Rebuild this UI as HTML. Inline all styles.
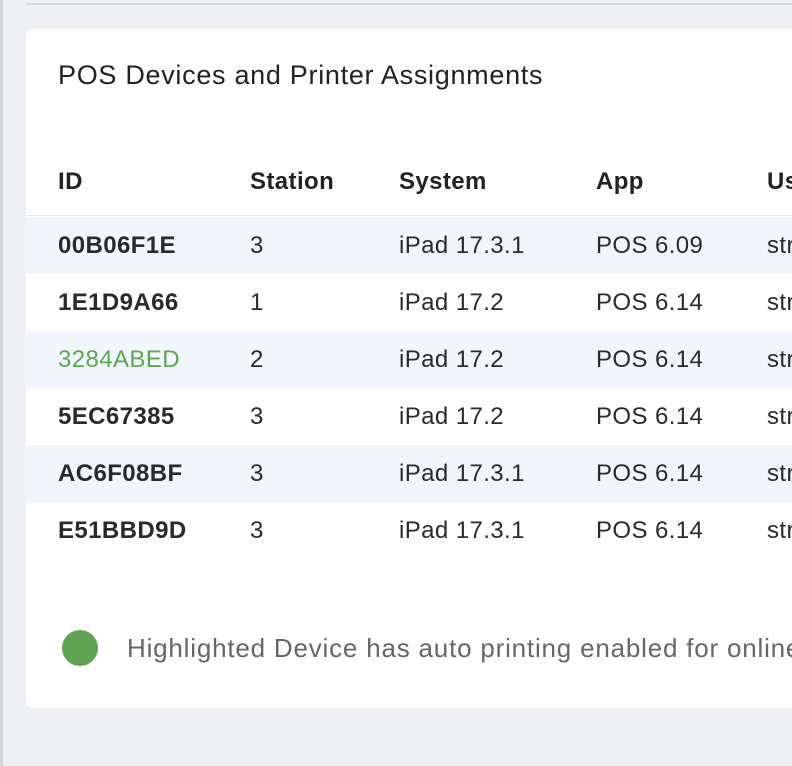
<!DOCTYPE html>
<html><head><style>
body{margin:0;width:792px;height:766px;overflow:hidden;background:#eef0f3;font-family:"Liberation Sans",sans-serif;position:relative}
.lb{position:absolute;left:0;top:0;width:3px;height:766px;background:#d4d5d8}
.tl{position:absolute;left:26px;top:3px;width:766px;height:2px;background:#d6d8dc}
.card{position:absolute;left:26px;top:29px;width:766px;height:679px;background:#fff;border-radius:7px 0 0 7px;overflow:hidden}
.t{position:absolute;left:32px;top:31px;font-size:27px;letter-spacing:0.7px;color:#222;white-space:nowrap}
.row{position:absolute;left:0;width:766px;height:57px}
.row span{position:absolute;top:15px;font-size:24px;letter-spacing:0.4px;color:#2a2a2a;white-space:nowrap}
.h span{font-weight:bold;color:#222}
.alt{background:#f1f6fd}
.c1{left:32px;font-weight:bold}.c2{left:224px}.c3{left:373px}.c4{left:570px}.c5{left:741px}
.dot{position:absolute;left:36px;top:601px;width:36px;height:36px;border-radius:50%;background:#5fa450}
.ft{position:absolute;left:101px;top:604px;font-size:26px;letter-spacing:0.8px;color:#666;white-space:nowrap}
</style></head><body>
<div class="lb"></div><div class="tl"></div>
<div class="card">
<div class="t">POS Devices and Printer Assignments</div>
<div class="row h" style="top:124px"><span class="c1">ID</span><span class="c2">Station</span><span class="c3">System</span><span class="c4">App</span><span class="c5">User</span></div>
<div style="position:absolute;left:0;top:186px;width:766px;height:1px;background:#e8ebef"></div>
<div class="row alt" style="top:188px"><span class="c1">00B06F1E</span><span class="c2">3</span><span class="c3">iPad 17.3.1</span><span class="c4">POS 6.09</span><span class="c5">str</span></div>
<div class="row" style="top:245px"><span class="c1">1E1D9A66</span><span class="c2">1</span><span class="c3">iPad 17.2</span><span class="c4">POS 6.14</span><span class="c5">str</span></div>
<div class="row alt" style="top:302px"><span class="c1" style="color:#5fa450;font-weight:normal">3284ABED</span><span class="c2">2</span><span class="c3">iPad 17.2</span><span class="c4">POS 6.14</span><span class="c5">str</span></div>
<div class="row" style="top:359px"><span class="c1">5EC67385</span><span class="c2">3</span><span class="c3">iPad 17.2</span><span class="c4">POS 6.14</span><span class="c5">str</span></div>
<div class="row alt" style="top:416px"><span class="c1">AC6F08BF</span><span class="c2">3</span><span class="c3">iPad 17.3.1</span><span class="c4">POS 6.14</span><span class="c5">str</span></div>
<div class="row" style="top:473px"><span class="c1">E51BBD9D</span><span class="c2">3</span><span class="c3">iPad 17.3.1</span><span class="c4">POS 6.14</span><span class="c5">str</span></div>
<div class="dot"></div>
<div class="ft">Highlighted Device has auto printing enabled for online orders</div>
</div>
</body></html>
